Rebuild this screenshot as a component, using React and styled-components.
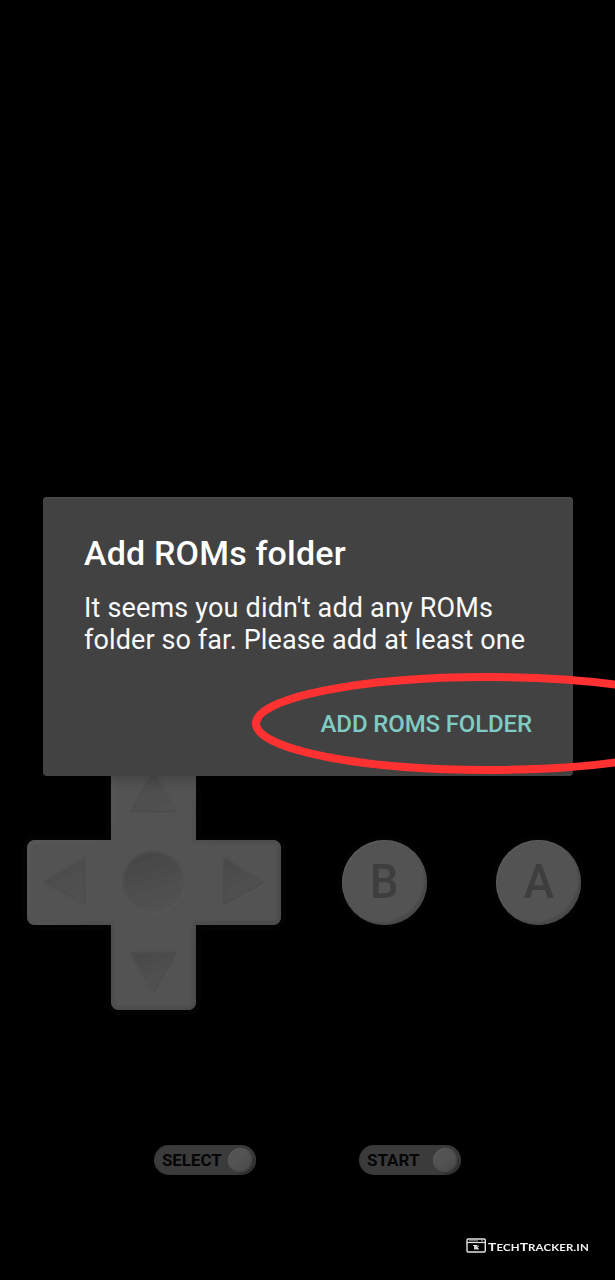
import React from "react";
import styled, { createGlobalStyle } from "styled-components";

const GlobalStyle = createGlobalStyle`
  body { margin: 0; background: #000; }
  * { box-sizing: border-box; }
`;

const Screen = styled.main`
  position: relative;
  display: flex;
  flex-direction: column;
  width: 615px;
  height: 1280px;
  overflow: hidden;
  background: #000;
  font-family: Roboto, "Liberation Sans", sans-serif;
`;

const GameDisplay = styled.div`
  flex: none;
  height: 746px;
`;

const Controls = styled.section`
  display: flex;
  align-items: center;
  height: 274px;
  padding-left: 17px;
`;

const DPadDrawing = styled.svg`
  display: block;
  flex: none;
  width: 274px;
  height: 274px;
`;

const ActionButtons = styled.div`
  display: flex;
  gap: 69px;
  margin: -2px 0 0 51px;
`;

const RoundButton = styled.button`
  display: flex;
  align-items: center;
  justify-content: center;
  width: 85px;
  height: 85px;
  padding: 0;
  border: 0;
  border-radius: 50%;
  background: radial-gradient(circle at 45% 45%, #535353 0 64%, #484848 70%, #3c3c3c 76%);
  box-shadow: inset 1px 1px 2px #5b5b5b, inset -1px -1px 2px #4c4c4c, 0 0 8px 3px #040404;
  color: #3e3e3e;
  font: 500 48px/1 Roboto, sans-serif;
  text-shadow: 1px 1px 1px #565656;
`;

const Letter = styled.span`
  display: block;
  transform: scaleX(0.95);
`;

const SystemButtons = styled.section`
  display: flex;
  gap: 103px;
  margin-top: 125px;
  padding-left: 154px;
`;

const Pill = styled.button`
  display: flex;
  align-items: center;
  justify-content: space-between;
  width: 102px;
  height: 30px;
  padding: 0 3px 0 8px;
  border: 0;
  border-radius: 15px;
  background: #3b3b3b;
  box-shadow: inset 0 0 2px #333;
  color: #060606;
  font: 700 17px/30px Roboto, sans-serif;
  letter-spacing: ${({ $tracking }) => $tracking};
`;

const Knob = styled.span`
  width: 25px;
  height: 25px;
  border-radius: 50%;
  background: linear-gradient(135deg, #535353 45%, #484848);
  box-shadow: inset 1px 1px 1px #5a5a5a, inset -1px -1px 2px #353535, 1px 1px 1px #292929;
`;

const Footer = styled.footer`
  display: flex;
  align-items: center;
  gap: 2px;
  height: 17px;
  margin-top: 62px;
  padding-left: 466px;
  color: #f2f2f2;
`;

const LogoIcon = styled.svg`
  display: block;
  flex: none;
  width: 20px;
  height: 17px;
`;

const Brand = styled.span`
  margin-top: 2px;
  font: 700 9.6px/17px Lato, sans-serif;
  text-transform: uppercase;
  letter-spacing: 0.1px;
  white-space: nowrap;
  transform: scaleX(1.2);
  transform-origin: left center;
`;

const Initial = styled.span`
  font-size: 11.5px;
`;

const Dialog = styled.section`
  position: absolute;
  top: 497px;
  left: 43px;
  display: flex;
  flex-direction: column;
  width: 530px;
  height: 279px;
  padding: 36px 41px 0;
  border-radius: 4px;
  background: #424242;
  box-shadow: 0 4px 12px rgba(0, 0, 0, 0.2), inset 0 1px 0 #4a4a4a;
`;

const Title = styled.h1`
  margin: 0;
  color: #fff;
  font-size: 34px;
  font-weight: 500;
  line-height: 40px;
  letter-spacing: 0.18px;
  white-space: nowrap;
`;

const Message = styled.p`
  margin: 19px 0 0;
  color: #fafafa;
  font-size: 27px;
  line-height: 32px;
  letter-spacing: ${({ $tracking }) => $tracking};
  white-space: nowrap;
`;

const WideLine = styled.span`
  letter-spacing: 0.17px;
`;

const DialogAction = styled.button`
  align-self: flex-end;
  margin-top: 53px;
  padding: 0;
  border: 0;
  background: none;
  color: #80cbc4;
  font: 500 24px/30px Roboto, sans-serif;
  letter-spacing: -0.13px;
  white-space: nowrap;
`;

const Highlight = styled.svg`
  position: absolute;
  top: 665px;
  left: 245px;
  width: 370px;
  height: 120px;
  pointer-events: none;
`;

const CROSS =
  "M102 10H170Q179 10 179 19V94H255Q264 94 264 103V170Q264 179 255 179H179V255Q179 264 170 264H103Q94 264 94 255V179H19Q10 179 10 170V103Q10 94 19 94H94V18Q94 10 102 10Z";

const ARROWS = [
  "M137 26L160 66H114Z",
  "M27 137L68 112V158Z",
  "M247 137L207 112V159Z",
  "M137 247L114 207H160Z",
];

function DPad() {
  return (
    <DPadDrawing viewBox="0 0 274 274" aria-label="Directional pad">
      <defs>
        <linearGradient id="dent" x1="0" y1="0" x2="0.5" y2="1">
          <stop offset="0" stopColor="#484848" />
          <stop offset="0.6" stopColor="#4f4f4f" />
          <stop offset="1" stopColor="#515151" />
        </linearGradient>
        <linearGradient id="rim" x1="0" y1="0" x2="1" y2="1">
          <stop offset="0" stopColor="#5b5b5b" />
          <stop offset="0.5" stopColor="#4f4f4f" />
          <stop offset="1" stopColor="#494949" />
        </linearGradient>
        <linearGradient id="bowl" x1="0.2" y1="0" x2="0.5" y2="1">
          <stop offset="0" stopColor="#454545" />
          <stop offset="0.65" stopColor="#4f4f4f" />
          <stop offset="1" stopColor="#525252" />
        </linearGradient>
        <clipPath id="face"><path d={CROSS} /></clipPath>
        <filter id="soft"><feGaussianBlur stdDeviation="0.8" /></filter>
      </defs>
      <path d={CROSS} fill="none" stroke="#030303" strokeWidth="10" />
      <path d={CROSS} fill="#535353" />
      <g clipPath="url(#face)">
        <path d={CROSS} fill="none" stroke="url(#rim)" strokeWidth="8" filter="url(#soft)" />
      </g>
      {ARROWS.map((d) => (
        <g key={d}>
          <path d={d} fill="none" stroke="#5a5a5a" strokeWidth="1.5" transform="translate(1 1)" />
          <path d={d} fill="url(#dent)" stroke="#454545" strokeWidth="1" filter="url(#soft)" />
        </g>
      ))}
      <circle cx="137" cy="137" r="31.5" fill="#585858" />
      <circle cx="136.5" cy="136.5" r="31" fill="url(#bowl)" filter="url(#soft)" />
    </DPadDrawing>
  );
}

export default function App() {
  return (
    <>
      <GlobalStyle />
      <Screen>
        <GameDisplay />
        <Controls>
          <DPad />
          <ActionButtons>
            <RoundButton><Letter>B</Letter></RoundButton>
            <RoundButton><Letter>A</Letter></RoundButton>
          </ActionButtons>
        </Controls>
        <SystemButtons>
          <Pill $tracking="-0.1px">SELECT<Knob /></Pill>
          <Pill $tracking="0px">START<Knob /></Pill>
        </SystemButtons>
        <Footer>
          <LogoIcon viewBox="0 0 20 17" fill="none" stroke="#e4e4e4" aria-hidden="true">
            <rect x="1" y="2" width="18.3" height="13" rx="1.2" strokeWidth="1.4" />
            <path d="M1 5.5H19" strokeWidth="1.2" />
            <path d="M3 3.8H12M15 3.8H17" stroke="#999" strokeWidth="1" />
            <path d="M7 8.5H11M8.7 8.5V12.5M10 12.5V9.5L12.5 12.5M12 8.5V10" strokeWidth="1.2" />
          </LogoIcon>
          <Brand><Initial>T</Initial>ech<Initial>T</Initial>racker.in</Brand>
        </Footer>
        <Dialog role="dialog">
          <Title>Add ROMs folder</Title>
          <Message $tracking="0.1px">
            <WideLine>It seems you didn't add any ROMs</WideLine>
            <br />
            folder so far. Please add at least one
          </Message>
          <DialogAction>ADD ROMS FOLDER</DialogAction>
        </Dialog>
        <Highlight viewBox="245 665 370 120" aria-hidden="true">
          <ellipse cx="488" cy="723.5" rx="232" ry="46.5" fill="none" stroke="#ff3131" strokeWidth="8" />
        </Highlight>
      </Screen>
    </>
  );
}
